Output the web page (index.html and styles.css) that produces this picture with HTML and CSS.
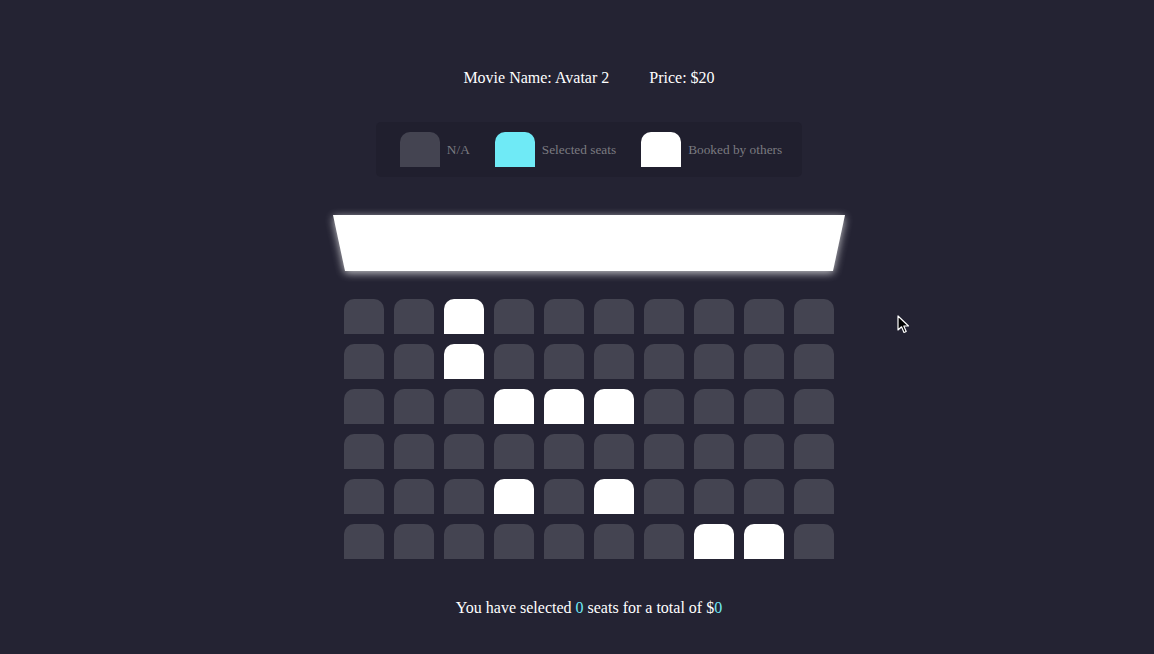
FILE: index.html
```html
<!DOCTYPE html>
<html>
<head>
<meta charset="utf-8">
<link rel="stylesheet" href="styles.css">
</head>
<body>
<div class="page">
  <div class="movie">
    <span>Movie Name: Avatar 2</span>
    <span>Price: $20</span>
  </div>
  <ul class="showcase">
    <li><div class="seat"></div><small>N/A</small></li>
    <li><div class="seat selected"></div><small>Selected seats</small></li>
    <li><div class="seat occupied"></div><small>Booked by others</small></li>
  </ul>
  <div class="screen-wrap"><div class="screen"></div></div>
  <div class="seats">
    <div class="seat"></div><div class="seat"></div><div class="seat occupied"></div><div class="seat"></div><div class="seat"></div><div class="seat"></div><div class="seat"></div><div class="seat"></div><div class="seat"></div><div class="seat"></div>
    <div class="seat"></div><div class="seat"></div><div class="seat occupied"></div><div class="seat"></div><div class="seat"></div><div class="seat"></div><div class="seat"></div><div class="seat"></div><div class="seat"></div><div class="seat"></div>
    <div class="seat"></div><div class="seat"></div><div class="seat"></div><div class="seat occupied"></div><div class="seat occupied"></div><div class="seat occupied"></div><div class="seat"></div><div class="seat"></div><div class="seat"></div><div class="seat"></div>
    <div class="seat"></div><div class="seat"></div><div class="seat"></div><div class="seat"></div><div class="seat"></div><div class="seat"></div><div class="seat"></div><div class="seat"></div><div class="seat"></div><div class="seat"></div>
    <div class="seat"></div><div class="seat"></div><div class="seat"></div><div class="seat occupied"></div><div class="seat"></div><div class="seat occupied"></div><div class="seat"></div><div class="seat"></div><div class="seat"></div><div class="seat"></div>
    <div class="seat"></div><div class="seat"></div><div class="seat"></div><div class="seat"></div><div class="seat"></div><div class="seat"></div><div class="seat"></div><div class="seat occupied"></div><div class="seat occupied"></div><div class="seat"></div>
  </div>
  <p class="text">You have selected <span class="hl">0</span> seats for a total of $<span class="hl">0</span></p>
</div>
<svg class="cursor" width="14" height="20" viewBox="0 0 14 20"><path d="M1 1 L1 15 L4.5 11.8 L7 17.5 L9.2 16.5 L6.8 11 L11.5 11 Z" fill="#000" stroke="#fff" stroke-width="1.2" stroke-linejoin="round"/></svg>
</body>
</html>
```
FILE: styles.css
```css
html, body {
  margin: 0;
  padding: 0;
  background: #242333;
  height: 100%;
  overflow: hidden;
}
body {
  font-family: "Liberation Serif", "Times New Roman", serif;
  color: #fff;
  position: relative;
}
.page {
  display: flex;
  flex-direction: column;
  align-items: center;
  padding-top: 68px;
  padding-left: 24px;
}
.movie {
  display: flex;
  gap: 40px;
  font-size: 16px;
  line-height: 20px;
}
.showcase {
  list-style: none;
  margin: 34px 0 0;
  padding: 10px 20px 10px 24px;
  background: #201f2e;
  border-radius: 5px;
  display: flex;
  gap: 25px;
  color: #7a7a80;
}
.showcase li {
  display: flex;
  align-items: center;
}
.showcase small {
  font-size: 13.333px;
  margin-left: 7px;
}
.seat {
  width: 40px;
  height: 35px;
  background: #444451;
  border-top-left-radius: 10px;
  border-top-right-radius: 10px;
}
.seat.selected { background: #6feaf6; }
.seat.occupied { background: #fff; }
.screen-wrap {
  margin-top: 38px;
  width: 512px;
  filter: drop-shadow(0 2px 4px rgba(255,255,255,0.75));
}
.screen {
  height: 56px;
  background: #fff;
  clip-path: polygon(0 0, 100% 0, calc(100% - 12px) 100%, 12px 100%);
}
.seats {
  margin-top: 28px;
  display: grid;
  grid-template-columns: repeat(10, 40px);
  gap: 10px;
}
.text {
  margin: 39px 0 0;
  font-size: 16px;
  line-height: 20px;
}
.hl { color: #6feaf6; }
.cursor {
  position: absolute;
  left: 897px;
  top: 315px;
}
```
